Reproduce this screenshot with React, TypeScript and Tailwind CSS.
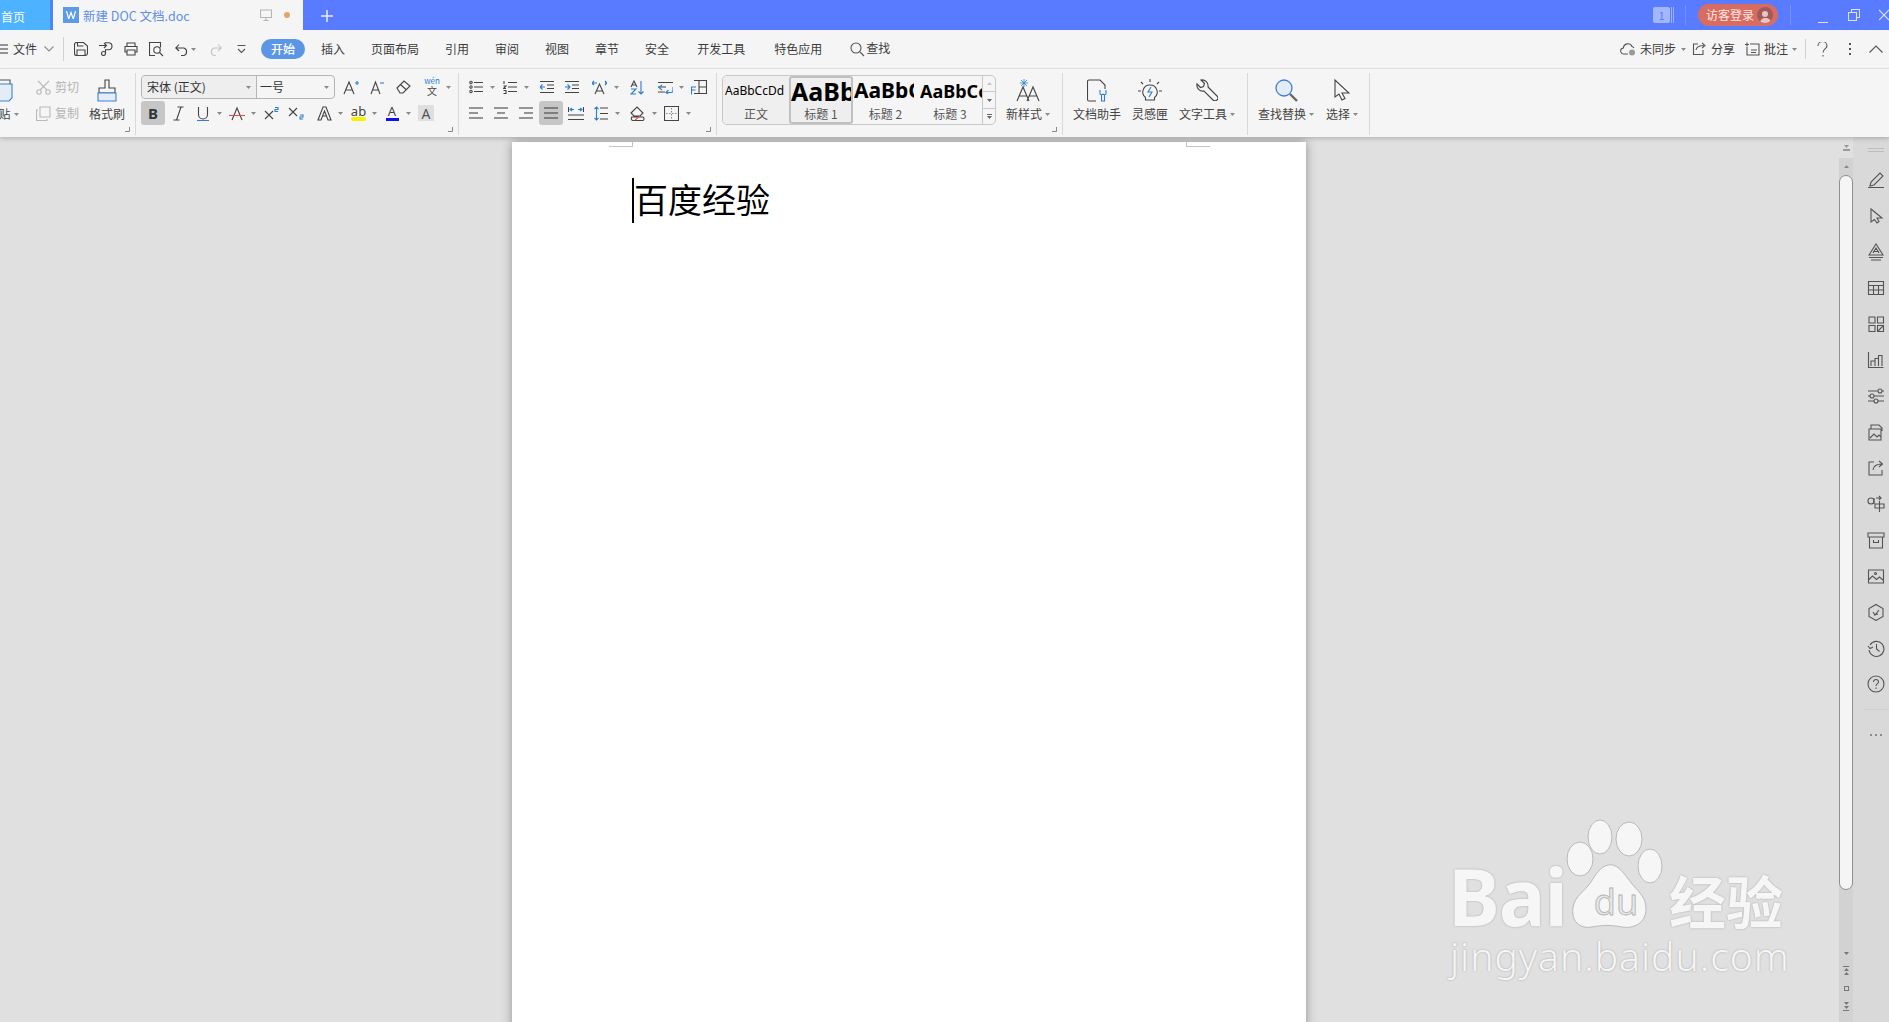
import { ReactNode } from "react";

const sans = "font-['Noto_Sans_CJK_SC','Noto_Sans',sans-serif]";

type IconProps = { w?: number; h?: number; className?: string; children: ReactNode; stroke?: string };

const Ic = ({ w = 15, h = 15, className = "", children, stroke = "#444" }: IconProps) => (
  <svg width={w} height={h} viewBox={`0 0 ${w} ${h}`} fill="none" stroke={stroke} strokeWidth={1.1} className={`shrink-0 ${className}`}>
    {children}
  </svg>
);

const Caret = ({ className = "", color = "#8a8a8a" }: { className?: string; color?: string }) => (
  <svg width={5} height={3} viewBox="0 0 5 3" className={`shrink-0 ${className}`}>
    <path d="M0 0h5L2.5 3z" fill={color} />
  </svg>
);

const Sep = () => <div className="w-px h-[62px] mt-[4px] bg-[#d9d9d9] shrink-0" />;

const Launcher = () => (
  <svg width={5} height={5} viewBox="0 0 5 5" className="absolute right-[5px] bottom-[5px]">
    <path d="M0 4.5h4.5V0" fill="none" stroke="#888" />
  </svg>
);

const Row = ({ children }: { children: ReactNode }) => <div className="flex items-center h-6">{children}</div>;

const Lines = ({ rows, className = "" }: { rows: [number, number, number][]; className?: string }) => (
  <Ic w={14} h={14} className={className}>
    {rows.map(([x1, x2, y]) => (
      <path key={y} d={`M${x1} ${y}H${x2}`} />
    ))}
  </Ic>
);

const TallBtn = ({ icon, label, caret, className = "" }: { icon: ReactNode; label: string; caret?: boolean; className?: string }) => (
  <div className={`flex flex-col items-center shrink-0 ${className}`}>
    <div className="h-[30px] flex items-center justify-center">{icon}</div>
    <div className="h-[18px] flex items-center text-[12px] text-[#444] whitespace-nowrap">
      {label}
      {caret && <Caret className="ml-[3px]" />}
    </div>
  </div>
);

const TopBar = () => (
  <div className="h-[30px] bg-[#587bff] flex items-stretch shrink-0">
    <div className="w-[50px] bg-[#4db2ff] text-white text-[12px] flex items-center pl-px pt-[3px]">首页</div>
    <div className="w-[3px] bg-[#4a86f5]" />
    <div className="w-[250px] bg-[#f5f5f5] flex items-center">
      <div className="ml-[10px] w-4 h-4 bg-[#5b9be8] text-white flex items-center justify-center">
        <svg width={10} height={8} viewBox="0 0 10 8" fill="none" stroke="#fff" strokeWidth={1.2}>
          <path d="M.5 0l2.2 8L5 1.5 7.3 8 9.5 0" />
        </svg>
      </div>
      <span className="ml-1 pt-[3px] text-[12.5px] text-[#5f8fe8]">新建 DOC 文档.doc</span>
      <Ic w={12} h={12} stroke="#b5b5b5" className="ml-[70px]">
        <path d="M.5 1h11v7.5H.5zM6 8.5V11M3.5 11.5h5" />
      </Ic>
      <div className="ml-[12px] w-[6px] h-[6px] rounded-full bg-[#e8a468]" />
    </div>
    <Ic w={14} h={14} stroke="#e6ebff" className="ml-[17px] mt-[9px]">
      <path d="M7 1v12M1 7h12" strokeWidth={1.5} />
    </Ic>
    <div className="flex-1" />
    <div className="flex items-center">
      <div className="w-[17px] h-4 rounded-[2px] bg-[#a3b6ff] text-[#5b7ef5] text-[11px] leading-4 text-center">1</div>
      <div className="ml-px w-[3px] h-4 border-x border-[#9db2ff]" />
      <div className="ml-[11px] w-px h-5 bg-[#7891ff]" />
      <div className="ml-[12px] w-[80px] h-[22px] rounded-full bg-[#d86c60] flex items-center pl-[8px] text-[12px] text-[#fbe8e4]">
        访客登录
        <div className="ml-[3px] w-4 h-4 rounded-full bg-[#a05a5c] flex flex-col items-center justify-end overflow-hidden">
          <div className="w-[6px] h-[6px] rounded-full bg-[#e8c5c0]" />
          <div className="w-[11px] h-[5px] mt-px rounded-t-full bg-[#e8c5c0]" />
        </div>
      </div>
      <div className="ml-[12px] w-px h-5 bg-[#7891ff]" />
      <Ic w={10} h={10} stroke="#dbe3ff" className="ml-[27px] mt-[6px]">
        <path d="M0 9.5h10" />
      </Ic>
      <Ic w={12} h={12} stroke="#dbe3ff" className="ml-[20px]">
        <path d="M.5 3.5h8v8h-8zM3.5 3.5v-3h8v8h-3" />
      </Ic>
      <Ic w={10} h={12} stroke="#dbe3ff" className="ml-[19px]">
        <path d="M0 1l10 10M10 1L0 11" />
      </Ic>
    </div>
  </div>
);

const menuItem = "text-[12px] text-[#3c3c3c] whitespace-nowrap";

const MenuBar = () => (
  <div className="h-[39px] bg-[#f5f5f5] border-b border-[#e3e3e3] flex items-center shrink-0">
    <Lines rows={[[-4, 8, 3], [-4, 8, 7], [-4, 8, 11]]} />
    <span className={`-ml-px ${menuItem}`}>文件</span>
    <Ic w={10} h={6} stroke="#8c8c8c" className="ml-[7px]">
      <path d="M.5.5L5 5 9.5.5" />
    </Ic>
    <div className="ml-[9px] w-px h-6 bg-[#d2d2d2]" />
    <Ic w={14} h={14} className="ml-[10px]">
      <path d="M.5 2.5a2 2 0 012-2h7l4 3.5v7a2.5 2.5 0 01-2.5 2.5h-8.500a2 2 0 01-2-2zM3 13V8h8v5M3.500 1v3h6" />
    </Ic>
    <Ic w={14} h={14} className="ml-[11px]">
      <path d="M0 3.5h7M5 1l2.5 2.5L5 6M6 .8h3.5a3.5 3.5 0 010 7H6.500v3" />
      <circle cx={4.5} cy={11.5} r={2} />
    </Ic>
    <Ic w={14} h={14} className="ml-[11px]">
      <path d="M3 4V1h8v3M3 10H1V4.500h12V10h-2M3 8h8v5H3z" />
    </Ic>
    <Ic w={15} h={15} className="ml-[11px]">
      <path d="M6 13.500H.5V.5h11v5" />
      <circle cx={8} cy={8} r={3.2} />
      <path d="M10.500 10.500l3.500 3.500" />
    </Ic>
    <Ic w={14} h={13} className="ml-[11px]">
      <path d="M1 5h8a4 4 0 010 7.500H6M4 1.500L.8 5 4 8" />
    </Ic>
    <Caret className="ml-[2px]" />
    <Ic w={13} h={13} stroke="#c4c4c4" className="ml-[13px]">
      <path d="M12 5H5a4 4 0 000 7.500h2M9 1.500L12.200 5 9 8" />
    </Ic>
    <Ic w={9} h={9} stroke="#555" className="ml-[15px]">
      <path d="M.5.5h8M1 4l3.500 3.500L8 4" />
    </Ic>
    <div className="ml-[15px] w-[44px] h-5 rounded-full bg-[#5b96e6] text-white text-[12px] font-medium flex items-center justify-center">开始</div>
    <span className={`ml-[16px] ${menuItem}`}>插入</span>
    <span className={`ml-[26px] ${menuItem}`}>页面布局</span>
    <span className={`ml-[26px] ${menuItem}`}>引用</span>
    <span className={`ml-[26px] ${menuItem}`}>审阅</span>
    <span className={`ml-[26px] ${menuItem}`}>视图</span>
    <span className={`ml-[26px] ${menuItem}`}>章节</span>
    <span className={`ml-[26px] ${menuItem}`}>安全</span>
    <span className={`ml-[28px] ${menuItem}`}>开发工具</span>
    <span className={`ml-[29px] ${menuItem}`}>特色应用</span>
    <Ic w={15} h={15} stroke="#555" className="ml-[28px]">
      <circle cx={6} cy={6} r={5} />
      <path d="M10 10l4 4" />
    </Ic>
    <span className={`ml-px -mt-[2px] ${menuItem}`}>查找</span>
    <div className="flex-1" />
    <Ic w={17} h={14} stroke="#555">
      <path d="M8 12H4a3 3 0 01-.6-6A4.500 4.500 0 0112 4.500a3.500 3.500 0 012 1.500" />
      <circle cx={12} cy={10.5} r={3} fill="#999" stroke="none" />
    </Ic>
    <span className={`ml-[3px] ${menuItem}`}>未同步</span>
    <Caret className="ml-[5px]" />
    <Ic w={14} h={14} stroke="#555" className="ml-[6px]">
      <path d="M6 2H1.500v10.500h9.500V8M4 8c.500-3 3-4.500 8-4.500M10 .8l3 2.700-3 2.700" />
    </Ic>
    <span className={`ml-[5px] ${menuItem}`}>分享</span>
    <Ic w={15} h={14} stroke="#555" className="ml-[10px]">
      <path d="M5 2h9v11H2V5M0 2.500h4M2 .5v4M6 8h6M6 10.500h5" />
    </Ic>
    <span className={`ml-[4px] ${menuItem}`}>批注</span>
    <Caret className="ml-[4px]" />
    <div className="ml-[8px] w-px h-5 bg-[#d2d2d2]" />
    <Ic w={11} h={15} stroke="#555" className="ml-[11px]">
      <path d="M1 4a4.500 4.500 0 119 0c0 2.500-4 3-4 6.500M6 13v1.500" />
    </Ic>
    <div className="ml-[21px] flex flex-col gap-[3px]">
      <div className="w-[2px] h-[2px] bg-[#555]" />
      <div className="w-[2px] h-[2px] bg-[#555]" />
      <div className="w-[2px] h-[2px] bg-[#555]" />
    </div>
    <Ic w={14} h={8} stroke="#555" className="ml-[18px] mr-[6px]">
      <path d="M.5 7.500L7 1l6.500 6.500" />
    </Ic>
  </div>
);

const StyleCell = ({ children, label, className = "", inner = "w-full" }: { children: ReactNode; label: string; className?: string; inner?: string }) => (
  <div className={`flex flex-col items-center overflow-hidden shrink-0 ${className}`}>
    <div className={`h-[30px] self-start flex items-center overflow-hidden whitespace-nowrap text-black font-['Noto_Sans',sans-serif] ${inner}`}>
      {children}
    </div>
    <div className="text-[12px] leading-4 text-[#555]">{label}</div>
  </div>
);

const Ribbon = () => (
  <div className="h-[68px] bg-[#f5f5f5] flex shrink-0 relative z-10 shadow-[0_2px_4px_rgba(0,0,0,0.18)]">
    {/* clipboard */}
    <div className="w-[135px] relative flex pt-[6px] overflow-hidden shrink-0">
      <TallBtn
        className="-ml-[18px] w-[41px]"
        label="粘贴"
        caret
        icon={
          <Ic w={26} h={24} stroke="#555">
            <path d="M2 6h20v14l-3 3H2z" fill="#e4ecf5" stroke="#3b83d6" />
            <path d="M8 6V2h12v4" />
          </Ic>
        }
      />
      <div className="ml-[13px] w-[53px] flex flex-col shrink-0">
        <Row>
          <Ic w={15} h={15} stroke="#b9b9b9">
            <path d="M2 1l9 9M13 1l-9 9" />
            <circle cx={3} cy={12} r={2.200} />
            <circle cx={12} cy={12} r={2.200} />
          </Ic>
          <span className="ml-[4px] text-[12px] text-[#b4b4b4]">剪切</span>
        </Row>
        <div className="h-[2px]" />
        <Row>
          <Ic w={15} h={15} stroke="#b9b9b9">
            <path d="M4 1h10v10H4zM2 4H.5v10.500H11V13" />
          </Ic>
          <span className="ml-[4px] text-[12px] text-[#b4b4b4]">复制</span>
        </Row>
      </div>
      <TallBtn
        className="w-[36px]"
        label="格式刷"
        icon={
          <Ic w={20} h={23} stroke="#444">
            <path d="M8 1h4v8h6v5H2V9h6z" />
            <path d="M1 14h18v8H1z" fill="#e4ecf5" stroke="#3b83d6" />
          </Ic>
        }
      />
      <Launcher />
    </div>
    <Sep />
    {/* font */}
    <div className="w-[322px] relative pt-[6px] shrink-0">
      <Row>
        <div className="ml-[5px] w-[194px] h-6 rounded-[4px] border border-[#b5b5b5] flex items-center text-[12px] text-[#333] shrink-0">
          <div className="w-[115px] h-full flex items-center pl-[5px] bg-[#eeeeee] rounded-l-[4px] border-r border-[#b5b5b5]">
            宋体 (正文)
            <Caret className="ml-auto mr-[5px]" />
          </div>
          <span className="ml-[3px]">一号</span>
          <Caret className="ml-auto mr-[5px]" />
        </div>
        <Ic w={16} h={15} className="ml-[8px]">
          <path d="M1 14L6 2l5 12M3 10h6" />
          <path d="M12 3h4M14 1v4" stroke="#2b7cd3" />
        </Ic>
        <Ic w={14} h={15} className="ml-[11px]">
          <path d="M1 14L5.500 2 10 14M3 10h5" />
          <path d="M10 3h4" stroke="#2b7cd3" />
        </Ic>
        <Ic w={15} h={14} className="ml-[12px]">
          <path d="M1 8l7-7 6 5-7 7H4zM4.500 4.500l6 5.500" />
        </Ic>
        <div className="ml-[13px] w-4 flex flex-col items-center shrink-0">
          <span className="text-[8px] leading-[8px] text-[#2b7cd3]">wén</span>
          <span className="text-[10px] leading-[12px] text-[#444]">文</span>
        </div>
        <Caret className="ml-[6px]" />
      </Row>
      <div className="h-[2px]" />
      <Row>
        <div className="ml-[5px] w-6 h-6 rounded-[3px] bg-[#c6c6c6] flex items-center justify-center text-[15px] font-bold text-[#333] font-['Noto_Sans',sans-serif]">B</div>
        <Ic w={11} h={15} className="ml-[8px]">
          <path d="M8 1L3.500 14M4.500 1h6M.5 14h6" />
        </Ic>
        <Ic w={12} h={15} className="ml-[13px]">
          <path d="M1.500 1v7.500a4.500 4.500 0 009 0V1" />
          <path d="M0 14.500h12" stroke="#2b7cd3" />
        </Ic>
        <Caret className="ml-[8px]" />
        <Ic w={16} h={15} className="ml-[7px]">
          <path d="M3 14L8 2l5 12" />
          <path d="M0 9.500h16" stroke="#e05050" />
        </Ic>
        <Caret className="ml-[6px]" />
        <Ic w={15} h={14} className="ml-[8px]">
          <path d="M1 5l8 8M9 5l-8 8" />
          <path d="M11 1.500h3v2h-3v2h3" stroke="#2b7cd3" />
        </Ic>
        <Ic w={17} h={14} className="ml-[9px]">
          <path d="M1 2l8 8M9 2l-8 8" />
          <path d="M12 9h3v2h-3v2h3" stroke="#2b7cd3" />
        </Ic>
        <Ic w={15} h={15} className="ml-[12px]">
          <path d="M1 14L6 1h3l5 13h-3L7.500 5 4 14zM5 10h5" />
        </Ic>
        <Caret className="ml-[6px]" />
        <div className="ml-[8px] w-[15px] flex flex-col items-center shrink-0">
          <span className="text-[13px] leading-[12px] text-[#444] font-['Noto_Sans',sans-serif]">ab</span>
          <div className="w-[15px] h-1 bg-[#f8f000] rounded-sm" />
        </div>
        <Caret className="ml-[6px]" />
        <div className="ml-[9px] w-3 flex flex-col items-center shrink-0">
          <span className="text-[13px] leading-[12px] text-[#444] font-['Noto_Sans',sans-serif]">A</span>
          <div className="w-[13px] h-[3px] mt-px bg-[#1010f0]" />
        </div>
        <Caret className="ml-[8px]" />
        <div className="ml-[7px] w-4 h-4 bg-[#dfdfdf] flex items-center justify-center text-[14px] text-[#555] font-['Noto_Sans',sans-serif]">A</div>
      </Row>
      <Launcher />
    </div>
    <Sep />
    {/* paragraph */}
    <div className="w-[257px] relative pt-[6px] shrink-0">
      <Row>
        <Ic w={14} h={14} className="ml-[10px]">
          <path d="M5 2.500h9M5 7h9M5 11.500h9" />
          <circle cx={2} cy={2.500} r={1.200} />
          <circle cx={2} cy={7} r={1.200} />
          <circle cx={2} cy={11.500} r={1.200} />
        </Ic>
        <Caret className="ml-[7px]" />
        <Ic w={14} h={14} className="ml-[8px]">
          <path d="M5 2.500h9M5 7h9M5 11.500h9M1 1v3M.5 6h2.500L.5 8.500H3M.5 10.500H3v3H.5" />
        </Ic>
        <Caret className="ml-[7px]" />
        <Ic w={14} h={14} className="ml-[11px]">
          <path d="M0 1.500h14M7 5h7M7 8.500h7M0 12.500h14" />
          <path d="M5 7H0M2.500 4.500L0 7l2.500 2.500" stroke="#2b7cd3" />
        </Ic>
        <Ic w={14} h={14} className="ml-[11px]">
          <path d="M0 1.500h14M7 5h7M7 8.500h7M0 12.500h14" />
          <path d="M0 7h5M2.500 4.500L5 7 2.500 9.500" stroke="#2b7cd3" />
        </Ic>
        <Ic w={15} h={15} className="ml-[13px]">
          <path d="M3 14L7.500 4 12 14M4.500 11h6" />
          <path d="M0 3h5M13 3h2M2 1L0 3l2 2M13 1l2 2-2 2M1 3v2" stroke="#2b7cd3" />
        </Ic>
        <Caret className="ml-[7px]" />
        <Ic w={15} h={15} className="ml-[11px]">
          <path d="M1 7L4 1l3 6M2 5h4" />
          <path d="M1 9h5l-5 5h5M11 1v13M8.500 11.500L11 14l2.500-2.500" stroke="#2b7cd3" />
        </Ic>
        <Ic w={15} h={13} className="ml-[13px]">
          <path d="M0 1.500h15M0 6h8M0 11h7" />
          <path d="M4 4L1 6.500 4 9M15 6v3.500a2 2 0 01-2 2H8M10.500 9L8 11.500l2.500 2" stroke="#2b7cd3" />
        </Ic>
        <Caret className="ml-[6px]" />
        <Ic w={16} h={15} className="ml-[7px]">
          <path d="M3 .5h12.500v13H3M8 .5v13M8 7h7.500" />
          <path d="M5 7H.5v7.500M.5 10h4" stroke="#2b7cd3" />
        </Ic>
      </Row>
      <div className="h-[2px]" />
      <Row>
        <Lines className="ml-[10px]" rows={[[0, 14, 2], [0, 9, 7], [0, 14, 12]]} />
        <Lines className="ml-[11px]" rows={[[0, 14, 2], [3, 11, 7], [0, 14, 12]]} />
        <Lines className="ml-[11px]" rows={[[0, 14, 2], [5, 14, 7], [0, 14, 12]]} />
        <div className="ml-[6px] w-6 h-6 rounded-[3px] bg-[#c6c6c6] flex items-center justify-center shrink-0">
          <Lines rows={[[0, 14, 2], [0, 14, 7], [0, 14, 12]]} />
        </div>
        <Ic w={16} h={15} className="ml-[5px]">
          <path d="M0 9h16M0 13.500h16M.5 1v5M15.500 1v5" />
          <path d="M2 3.500h4M14 3.500h-4M4 1.800L2 3.500l2 1.700M12 1.800l2 1.700-2 1.700" stroke="#2b7cd3" />
        </Ic>
        <Ic w={14} h={15} className="ml-[10px]">
          <path d="M6 2h8M6 7.500h8M6 13h8" />
          <path d="M2.500 1v13M.5 3l2-2 2 2M.5 12l2 2 2-2" stroke="#2b7cd3" />
        </Ic>
        <Caret className="ml-[7px]" />
        <Ic w={16} h={15} className="ml-[10px]">
          <path d="M1 7l6-6 6 6-3 3H4zM2 11h11a2 2 0 010 3.500H3a2 2 0 01-1-3.500z" />
          <path d="M5 14l5-4" stroke="#e05050" />
        </Ic>
        <Caret className="ml-[6px]" />
        <Ic w={15} h={15} className="ml-[7px]">
          <path d="M.5.5h14v14H.5z" />
          <path d="M7.500 2v11M2 7.500h11" strokeDasharray="1.500 1.500" stroke="#888" />
        </Ic>
        <Caret className="ml-[7px]" />
      </Row>
      <Launcher />
    </div>
    <Sep />
    {/* styles */}
    <div className="w-[345px] relative pt-[6px] flex shrink-0">
      <div className="ml-[5px] w-[274px] h-[50px] rounded-[5px] border border-[#c8c8c8] flex shrink-0 overflow-hidden">
        <StyleCell label="正文" className="w-[66px] bg-[#efefef]">
          <span className="ml-[2px] text-[12px]">AaBbCcDd</span>
        </StyleCell>
        <StyleCell label="标题 1" className="w-[64px] bg-[#eeeeee] border-2 border-[#c0c0c0] rounded-[3px]">
          <span className="text-[25px] font-bold">AaBb</span>
        </StyleCell>
        <StyleCell label="标题 2" className="w-[65px]" inner="w-[60px] ml-[1px]">
          <span className="text-[21px] font-bold">AaBbCc</span>
        </StyleCell>
        <StyleCell label="标题 3" className="w-[64px]" inner="w-[62px] ml-[2px]">
          <span className="text-[18px] font-bold">AaBbCcDd</span>
        </StyleCell>
        <div className="flex-1 border-l border-[#c8c8c8] flex flex-col">
          <div className="h-4 flex items-center justify-center border-b border-[#c8c8c8]">
            <Caret className="rotate-180" color="#c8c8c8" />
          </div>
          <div className="h-[17px] flex items-center justify-center border-b border-[#c8c8c8]">
            <Caret color="#666" />
          </div>
          <div className="flex-1 flex flex-col items-center justify-center gap-px">
            <div className="w-[5px] h-px bg-[#666]" />
            <Caret color="#666" />
          </div>
        </div>
      </div>
      <TallBtn
        className="ml-[10px] w-[44px]"
        label="新样式"
        caret
        icon={
          <Ic w={24} h={24}>
            <path d="M1 23L7 9l6 14M3 18h8M11 23L17 9l6 14M13 18h8" />
            <path d="M8 1v8M4 5h8M5 2l6 6M11 2L5 8" stroke="#2b7cd3" strokeWidth={0.8} />
          </Ic>
        }
      />
      <Launcher />
    </div>
    <Sep />
    {/* tools */}
    <div className="w-[184px] pt-[6px] flex shrink-0">
      <TallBtn
        className="ml-[10px] w-[48px]"
        label="文档助手"
        icon={
          <Ic w={21} h={23}>
            <path d="M9 22H2a1.500 1.500 0 01-1.500-1.500v-18A1.500 1.500 0 012 1h11l5 5v4" />
            <path d="M13 11v4a2 2 0 003 0 2 2 0 003 0v-4M14.500 16v6h3v-6" stroke="#2b7cd3" />
          </Ic>
        }
      />
      <TallBtn
        className="ml-[11px] w-[36px]"
        label="灵感匣"
        icon={
          <Ic w={24} h={24}>
            <path d="M12 7a7 7 0 00-4.500 12.500V22h9v-2.500A7 7 0 0012 7z" />
            <path d="M13 9l-3 5h4l-3 5" stroke="#2b7cd3" />
            <path d="M12 1v3M3 4l2 2M21 4l-2 2M0 13h3M21 13h3" />
          </Ic>
        }
      />
      <TallBtn
        className="ml-[11px] w-[56px]"
        label="文字工具"
        caret
        icon={
          <Ic w={22} h={22}>
            <path d="M1 5l3.500 3.500 3-1 1-3L5 1a6 6 0 017 7l9 9a2.500 2.500 0 01-4 4L8 12a6 6 0 01-7-7z" />
          </Ic>
        }
      />
    </div>
    <Sep />
    {/* find */}
    <div className="w-[121px] pt-[6px] flex shrink-0">
      <TallBtn
        className="ml-[10px] w-[56px]"
        label="查找替换"
        caret
        icon={
          <Ic w={23} h={23}>
            <circle cx={9} cy={9} r={8} fill="#e4ecf5" stroke="#3b83d6" strokeWidth={1.300} />
            <path d="M15 15l7 7" strokeWidth={2.400} stroke="#666" />
          </Ic>
        }
      />
      <TallBtn
        className="ml-[12px] w-[32px]"
        label="选择"
        caret
        icon={
          <Ic w={16} h={22}>
            <path d="M1 1v17l4-3 3 6 3-1.500-3-5.500h7z" />
          </Ic>
        }
      />
    </div>
    <Sep />
  </div>
);

const railIcons: ReactNode[] = [
  <path key="a" d="M1 16.500h16M3 15l1-4L13 2l3 3-9 9z" />,
  <path key="b" d="M4 2v13l3.500-2.500 2.500 3.500 2-1.500-2-3.500H15z" />,
  <g key="c"><path d="M2 12L9 1l7 11zM6 10l3-5 3 5M6 8.500h6M2 14.500h14M4 17h10" /></g>,
  <path key="d" d="M1.500 2.500h15v13h-15zM1.500 6.500h15M1.500 11h15M6.500 6.500v9M11.500 6.500v9" />,
  <path key="e" d="M2 2h6v6H2zM10.500 2h6v6h-6zM2 10.500h6v6H2zM10.500 10.500h6v6h-6zM11 16l5-5" />,
  <path key="f" d="M1.500 1v15.500h15M4 15v-5h4v5M8 15V7.500h3.500V15M11.500 15V4.500H15V15" />,
  <g key="g"><path d="M1 4h10M15 4h2M1 9h2M7 9h10M1 14h6M11 14h6" /><circle cx={13} cy={4} r={2} /><circle cx={5} cy={9} r={2} /><circle cx={9} cy={14} r={2} /></g>,
  <path key="h" d="M4 6V2h8l3 3v3M2 6h12v11H2zM3 15l4-4 3 3 2-2 2 2" />,
  <path key="i" d="M7 3H2v13h13v-5M6 11c.500-4 3-6 9-6M12 2l3.500 3L12 8" />,
  <g key="j"><path d="M9 3h5M12 1l2 2-2 2M8 9h9v4H8zM12.500 6v11" /><circle cx={4} cy={6} r={3} /><path d="M7 3v6" /></g>,
  <path key="k" d="M1 2h16v4H1zM2.500 6v11h13V6M6.500 9v2.500h5V9" />,
  <g key="l"><path d="M1.500 3h15v13h-15zM1.500 13l4-4 4 3.500 3-2.500 4 3.500" /><circle cx={8.500} cy={6.500} r={1} /></g>,
  <g key="m"><path d="M9 1.500l7 4v8l-7 4-7-4v-8z" /><path d="M6 9l2 3 4-5M7 12l4-1" /></g>,
  <g key="n"><path d="M2 11a7.500 7.500 0 101-5M9.500 5v5l3 2.500M1 7l2 2.500L6 8" /></g>,
  <g key="o"><circle cx={9} cy={9} r={8} /><path d="M6.500 7a2.500 2.500 0 115 0c0 1.500-2.500 2-2.500 4M9 12.500v1.500" /></g>,
];

const Rail = () => (
  <div className="w-9 bg-[#d9d9d9] flex flex-col items-center pl-[10px] shrink-0">
    <div className="h-[25px] flex flex-col items-center justify-center gap-[2px]">
      <div className="w-4 h-px bg-[#bdbdbd]" />
      <div className="w-4 h-px bg-[#bdbdbd]" />
    </div>
    {railIcons.map((icon, i) => (
      <div key={i} className="h-9 w-full flex items-center justify-center">
        <Ic w={18} h={18} stroke="#555">{icon}</Ic>
      </div>
    ))}
    <div className="mt-[7px] w-[26px] h-px bg-[#cfcfcf]" />
    <div className="mt-[24px] flex gap-[3px]">
      <div className="w-[2px] h-[2px] bg-[#8c8c8c]" />
      <div className="w-[2px] h-[2px] bg-[#8c8c8c]" />
      <div className="w-[2px] h-[2px] bg-[#8c8c8c]" />
    </div>
  </div>
);

const Scrollbar = () => (
  <div className="w-[14px] bg-[#d2d2d2] flex flex-col items-center shrink-0">
    <div className="h-[21px] w-full bg-[#e0e0e0] flex flex-col items-center justify-center gap-px">
      <Caret color="#999" />
      <div className="w-[7px] h-[2px] bg-[#999]" />
    </div>
    <div className="h-[17px] flex items-center">
      <Caret className="rotate-180" color="#8a8a8a" />
    </div>
    <div className="w-[14px] h-[715px] bg-[#f5f5f5] border border-[#8f8f8f] rounded-[7px]" />
    <div className="mt-[62px] flex flex-col items-center">
      <Caret color="#777" />
      <div className="mt-[11px] flex flex-col items-center gap-px">
        <div className="w-[6px] h-px bg-[#777]" />
        <Caret className="rotate-180" color="#777" />
        <Caret className="rotate-180" color="#777" />
      </div>
      <div className="mt-[11px] w-[5px] h-[5px] border border-[#777]" />
      <div className="mt-[11px] flex flex-col items-center gap-px">
        <Caret color="#777" />
        <Caret color="#777" />
        <div className="w-[6px] h-px bg-[#777]" />
      </div>
    </div>
  </div>
);

const wmShadow = "[text-shadow:0_0_2px_#9f9f9f]";

const Watermark = () => (
  <div className="absolute left-[1448px] top-[682px] w-[350px] text-[#f6f6f6]">
    <div className="flex items-end h-[112px]">
      <span className={`text-[78px] leading-[70px] font-bold font-['Noto_Sans',sans-serif] tracking-[-1px] ${wmShadow}`}>Bai</span>
      <svg width={100} height={112} viewBox="0 0 100 112" className="shrink-0 -ml-[2px]">
        <g fill="#f6f6f6" stroke="#b9b9b9" strokeWidth={1}>
          <ellipse cx={15} cy={40} rx={13} ry={17} />
          <ellipse cx={35} cy={18} rx={12} ry={17} />
          <ellipse cx={64} cy={20} rx={13} ry={17} />
          <ellipse cx={85} cy={47} rx={12} ry={17} />
          <path d="M43 46c10-2 17 10 24 19 8 9 14 14 14 25 0 14-12 20-24 18-10-2-20-2-30 0C14 110 6 102 8 88c2-11 12-16 18-25 5-8 9-15 17-17z" />
        </g>
        <text x={51} y={96} textAnchor="middle" fontFamily="Noto Sans" fontSize={36} fill="#e6e6e6" stroke="#b0b0b0" strokeWidth={0.8}>
          du
        </text>
      </svg>
      <span className={`ml-[4px] text-[57px] leading-[64px] font-bold ${wmShadow}`}>经验</span>
    </div>
    <div className={`ml-[2px] text-[39px] leading-[50px] tracking-[1px] font-['Noto_Sans',sans-serif] font-light whitespace-nowrap ${wmShadow}`}>
      jingyan.baidu.com
    </div>
  </div>
);

export default function App() {
  return (
    <div className={`w-[1889px] h-[1022px] flex flex-col overflow-hidden ${sans}`}>
      <TopBar />
      <MenuBar />
      <Ribbon />
      <div className="flex-1 flex min-h-0">
        <div className="flex-1 relative bg-[#e0e0e0] overflow-hidden pt-[5px] pl-[512px]">
          <div className="w-[794px] h-[900px] bg-white relative shadow-[0_0_10px_rgba(0,0,0,0.35)] pl-[120px] pt-[36px]">
            <div className="absolute left-[97px] top-0 w-6 h-[5px] border-r border-b border-[#c4c4c4]" />
            <div className="absolute left-[674px] top-0 w-6 h-[5px] border-l border-b border-[#c4c4c4]" />
            <div className="flex items-start">
              <div className="w-[2px] h-[45px] bg-black" />
              <div className="text-[34px] leading-[41px] text-black">百度经验</div>
            </div>
          </div>
          <Watermark />
        </div>
        <Scrollbar />
        <Rail />
      </div>
    </div>
  );
}
